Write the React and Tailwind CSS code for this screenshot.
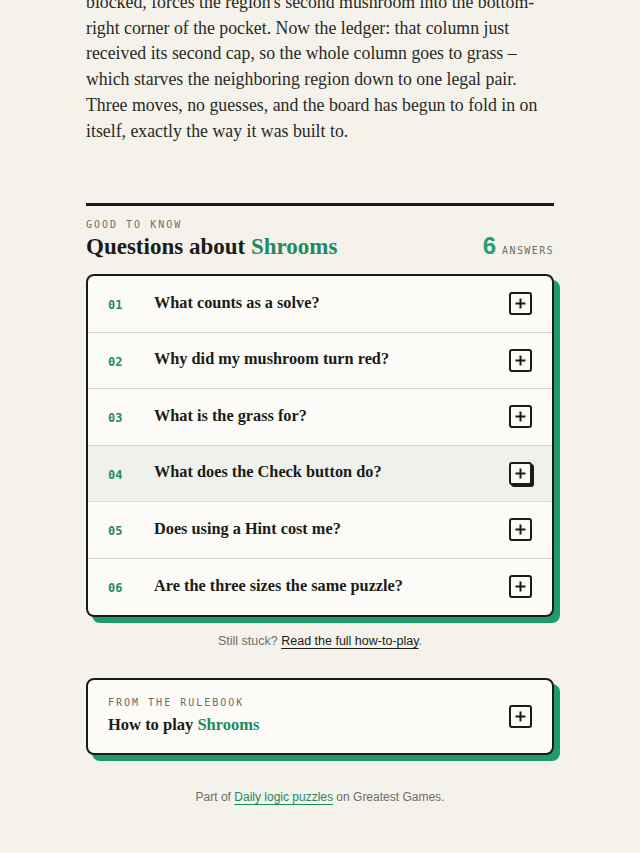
import React from "react";

const serif = "font-['Liberation_Serif',serif]";
const mono = "font-['DejaVu_Sans_Mono',monospace]";
const sans = "font-['Liberation_Sans',sans-serif]";

const questions = [
  "What counts as a solve?",
  "Why did my mushroom turn red?",
  "What is the grass for?",
  "What does the Check button do?",
  "Does using a Hint cost me?",
  "Are the three sizes the same puzzle?",
];

const articleLines = [
  "blocked, forces the region's second mushroom into the bottom-",
  "right corner of the pocket. Now the ledger: that column just",
  "received its second cap, so the whole column goes to grass –",
  "which starves the neighboring region down to one legal pair.",
  "Three moves, no guesses, and the board has begun to fold in on",
  "itself, exactly the way it was built to.",
];

const PlusBox = ({ raised }) => (
  <span
    className={`flex h-[23px] w-[23px] items-center justify-center rounded-[3px] border-2 border-[#1b1b18] bg-[#fcfbf7] ${
      raised ? "shadow-[2px_2px_0_#1b1b18]" : ""
    }`}
  >
    <svg width="11" height="11" viewBox="0 0 11 11">
      <path d="M5.5 0.5v10M0.5 5.5h10" stroke="#1b1b18" strokeWidth="2" />
    </svg>
  </span>
);

const FaqRow = ({ n, text, active, last }) => (
  <div
    className={`flex items-center px-[20px] h-[56.5px] ${last ? "" : "border-b border-[#dcd8cb]"} ${
      active ? "bg-[#eff2ec]" : ""
    }`}
  >
    <span className={`${mono} w-[46px] pt-[3px] text-[12px] font-bold text-[#2a8a62]`}>
      {String(n).padStart(2, "0")}
    </span>
    <span className={`${serif} flex-1 pb-[2px] text-[16.3px] font-bold text-[#1b1b18]`}>{text}</span>
    <PlusBox raised={active} />
  </div>
);

export default function App() {
  return (
    <div className="min-h-screen w-full overflow-hidden bg-[#f4f2eb]">
      <div className="mx-auto w-[468px]">
        {/* article tail */}
        <p className={`${serif} -mt-[10px] whitespace-nowrap text-[17.8px] leading-[25.7px] text-[#2a2925]`}>
          {articleLines.map((line) => (
            <span key={line} className="block">
              {line}
            </span>
          ))}
        </p>

        {/* FAQ */}
        <section className="mt-[59px] border-t-[3px] border-[#1b1b18] pt-[12px]">
          <div className={`${mono} text-[10px] leading-[14px] tracking-[0.2em] text-[#6f6d65]`}>GOOD TO KNOW</div>
          <div className="flex items-end justify-between">
            <h2 className={`${serif} text-[23px] font-bold leading-[30px] text-[#1b1b18]`}>
              Questions about <span className="text-[#228a5e]">Shrooms</span>
            </h2>
            <div className="flex items-baseline gap-[6px] pb-[4px]">
              <span className={`${sans} text-[24px] font-bold leading-none text-[#24a06c]`}>6</span>
              <span className={`${mono} text-[10px] tracking-[0.14em] text-[#6f6d65]`}>ANSWERS</span>
            </div>
          </div>

          <div className="mt-[12px] overflow-hidden rounded-[8px] border-2 border-[#1b1b18] bg-[#fcfbf7] shadow-[6px_6px_0_#1f9a69]">
            {questions.map((q, i) => (
              <FaqRow key={q} n={i + 1} text={q} active={i === 3} last={i === questions.length - 1} />
            ))}
          </div>

          <p className={`${sans} mt-[15px] text-center text-[12.5px] text-[#6f6d66]`}>
            Still stuck?{" "}
            <a className="text-[#1b1b18] underline underline-offset-[3px]" href="#how-to-play">
              Read the full how-to-play
            </a>
            .
          </p>
        </section>

        {/* rulebook card */}
        <div className="mt-[27px] flex items-center justify-between rounded-[8px] border-2 border-[#1b1b18] bg-[#fcfbf7] px-[20px] pb-[15px] pt-[15px] shadow-[6px_6px_0_#1f9a69]">
          <div>
            <div className={`${mono} text-[10px] tracking-[0.2em] text-[#6f6d65]`}>FROM THE RULEBOOK</div>
            <div className={`${serif} mt-[3px] text-[16.5px] font-bold text-[#1b1b18]`}>
              How to play <span className="text-[#228a5e]">Shrooms</span>
            </div>
          </div>
          <PlusBox />
        </div>

        <p className={`${sans} mt-[33px] pb-[40px] text-center text-[12px] text-[#6f6d66]`}>
          Part of{" "}
          <a className="text-[#228a5e] underline underline-offset-[3px]" href="#daily">
            Daily logic puzzles
          </a>{" "}
          on Greatest Games.
        </p>
      </div>
    </div>
  );
}
